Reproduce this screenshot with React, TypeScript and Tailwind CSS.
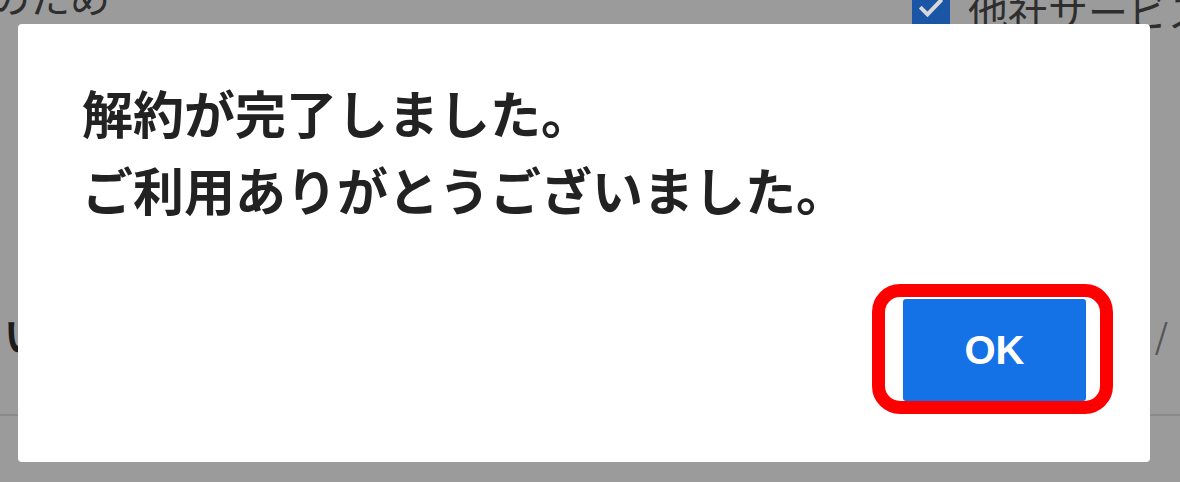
import React from 'react';

const jp = { fontFamily: '"Noto Sans CJK JP", "Noto Sans", sans-serif' };

function BackgroundPage() {
  return (
    <div className="flex h-full flex-col text-[#2e2e2e]" style={jp}>
      {/* top row, mostly scrolled away */}
      <div className="-mt-[18px] flex h-[48px] items-start justify-between text-[40px] leading-[48px]">
        <span className="-ml-[10px] -mt-[10px]">のため</span>
        <div className="mt-[4px] flex items-center gap-[18px]">
          <span className="flex h-[40px] w-[38px] items-end justify-center rounded-[3px] bg-[#1a55a6]">
            <svg viewBox="0 0 24 24" className="mb-[8px] h-[28px] w-[28px]" fill="none" stroke="#d8d8d8" strokeWidth="3.4" strokeLinecap="square">
              <path d="M4 12.5l5 5L20 6" />
            </svg>
          </span>
          <span className="w-[212px] overflow-hidden whitespace-nowrap">他社サービス</span>
        </div>
      </div>
      <div className="mt-[282px] flex h-[44px] items-center justify-between text-[40px]">
        <span className="ml-[4px] font-bold text-[#1c1c1c]">い</span>
        <span className="mr-[12px] text-[34px] text-[#555]">/</span>
      </div>
      <div className="mt-[58px] h-[2px] bg-[#8a8a8a]" />
    </div>
  );
}

export default function App() {
  return (
    <div className="relative h-[482px] w-[1180px] overflow-hidden bg-[#9b9b9b]">
      <BackgroundPage />

      {/* modal */}
      <div className="absolute left-[18px] top-[24px] flex h-[438px] w-[1132px] flex-col rounded-[4px] bg-white px-[64px] pb-[61px] pt-[50px]">
        <p className="text-[51px] font-bold leading-[77px] text-[#222]" style={jp}>
          解約が完了しました。
          <br />
          ご利用ありがとうございました。
        </p>
        <div className="mt-auto flex justify-end">
          <div className="relative">
            <button
              className="flex h-[102px] w-[183px] items-center justify-center rounded-[3px] bg-[#1472e6] text-[40px] font-bold text-white"
              style={{ fontFamily: '"Liberation Sans", Arial, sans-serif' }}
            >
              OK
            </button>
            {/* annotation ring */}
            <div className="pointer-events-none absolute -left-[31px] -right-[27px] -top-[15px] -bottom-[13px] rounded-[28px] border-[13px] border-[#ff0000]" />
          </div>
        </div>
      </div>
    </div>
  );
}
